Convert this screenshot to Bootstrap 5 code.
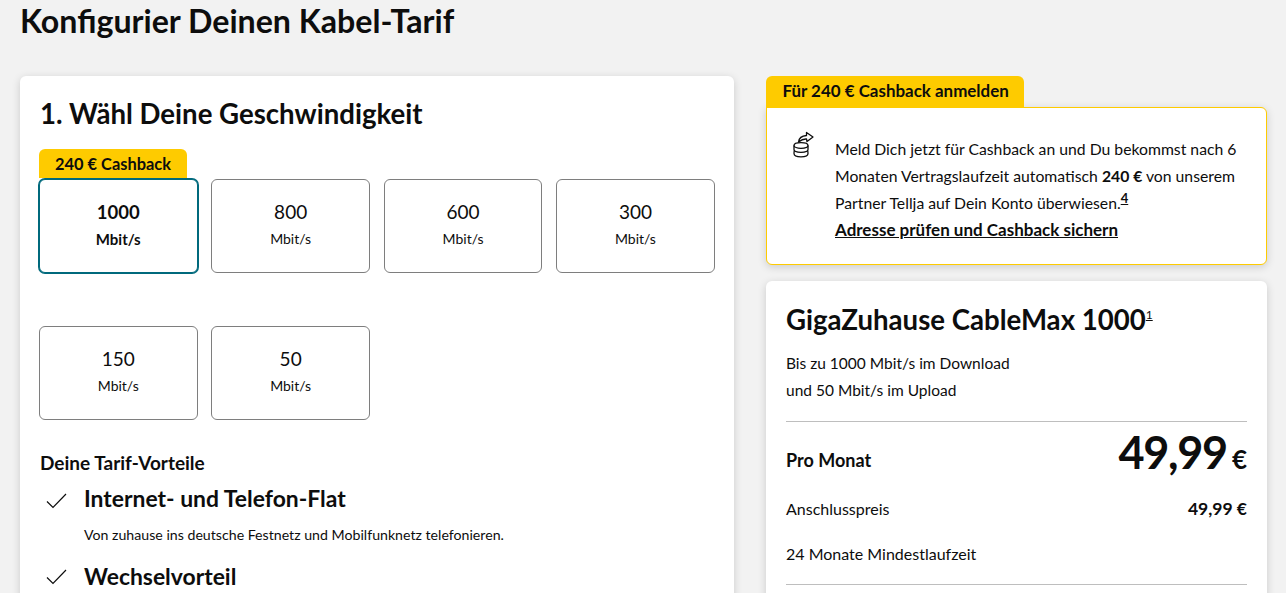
<!DOCTYPE html>
<html lang="de">
<head>
<meta charset="utf-8">
<title>Kabel-Tarif</title>
<link href="https://cdn.jsdelivr.net/npm/bootstrap@5.3.0/dist/css/bootstrap.min.css" rel="stylesheet">
<style>
html,body{height:593px;overflow:hidden}
body{background:#f2f2f2;color:#0d0d0d;font-family:"Lato","Liberation Sans",sans-serif;font-size:16px}
.page-wrap{padding:0 19px 0 20px}
.page-title{font-size:32.150px;line-height:42px;font-weight:700;margin:0}
.cols{display:grid;grid-template-columns:714px 501px;column-gap:32px;margin-top:34px}
.panel{background:#fff;border-radius:6px;box-shadow:0 2px 8px rgba(0,0,0,.16)}
.left-panel{padding:20px;height:560px}
.sec-title{font-size:27.600px;line-height:36px;font-weight:700;margin:0 0 47px}
.tiles{display:grid;grid-template-columns:repeat(4,158.500px);column-gap:13.900px;row-gap:53px;margin-left:-1px}
.tile{position:relative;height:94px;border:1px solid #7e7e7e;border-radius:6px;background:#fff;text-align:center;display:flex;flex-direction:column;justify-content:center;align-items:center}
.tile.sel{border-color:#00697c;box-shadow:0 0 0 1px #00697c;font-weight:700}
.tile-num{font-size:19px;line-height:26px}
.tile.sel .tile-num{font-size:18.500px}
.tile-unit{font-size:14px;line-height:28px;padding-bottom:1px}
.tile.sel .tile-unit{font-size:15px}
.tile-flag{position:absolute;left:-1px;top:-31px;width:148px;height:29px;background:#fecb00;border-radius:6px 6px 0 0;font-size:16.400px;line-height:30px;font-weight:700}
.perk-head{font-size:19px;line-height:26px;font-weight:700;margin:30px 0 0}
.perk{display:flex;margin-top:6px}
.perk + .perk{margin-top:15px}
.perk-ic{width:44px;flex:none;padding-left:6px;padding-top:11px;line-height:0}
.perk + .perk .perk-ic{padding-top:9px}
.perk-t{font-size:22.900px;line-height:32px;font-weight:700;margin:0}
.perk-d{font-size:14.170px;line-height:20px;margin:11px 0 0}
.flag{display:inline-block;background:#fecb00;border-radius:6px 6px 0 0;height:32px;padding:0 15.500px 0 16.500px;font-size:16.950px;line-height:30px;font-weight:700;vertical-align:top}
.cash{border:1px solid #fecb00;border-radius:0 6px 6px 6px;background:#fff;box-shadow:0 2px 8px rgba(0,0,0,.16);display:flex;height:158px;padding:0 20px;margin-top:-1px}
.cash-ic{width:48px;flex:none;padding-top:23px;padding-left:6px;line-height:0}
.cash-txt{padding-top:27px;line-height:27px;font-size:15.750px;margin:0}
.cash-txt sup{font-weight:700;text-decoration:underline;font-size:13px}
.cash-txt a{color:inherit;font-weight:700;font-size:17px;text-decoration:underline}
.tariff{margin-top:16px;padding:21px 20px 20px;height:340px}
.tariff-t{font-size:27.600px;line-height:36px;font-weight:700;margin:0 0 12px}
.tariff-t sup{font-size:12px;font-weight:400;text-decoration:underline;position:static;vertical-align:11px}
.tariff-d{line-height:27px;margin:0;font-size:15.500px}
.rule{height:1px;background:#bebebe;margin-top:17px}
.rule.low{margin-top:0}
.price-row{display:flex;justify-content:space-between;align-items:center;height:75px;font-weight:700;font-size:18px}
.price-lbl{margin-top:2px}
.price-val{margin-bottom:16px}
.price-big{font-size:45px;line-height:64px;letter-spacing:-1.300px}
.price-cur{font-size:26px;margin-left:5px}
.line-row{display:flex;justify-content:space-between;line-height:24px;margin-bottom:21px}
.line-row.last{margin-bottom:18px}
.line-row b{font-size:17.500px}
</style>
</head>
<body>
<div class="page-wrap">
  <h1 class="page-title">Konfigurier Deinen Kabel-Tarif</h1>
  <div class="cols">
    <div class="panel left-panel">
      <h2 class="sec-title">1. Wähl Deine Geschwindigkeit</h2>
      <div class="tiles">
        <div class="tile sel"><div class="tile-flag">240 € Cashback</div><div class="tile-num">1000</div><div class="tile-unit">Mbit/s</div></div>
        <div class="tile"><div class="tile-num">800</div><div class="tile-unit">Mbit/s</div></div>
        <div class="tile"><div class="tile-num">600</div><div class="tile-unit">Mbit/s</div></div>
        <div class="tile"><div class="tile-num">300</div><div class="tile-unit">Mbit/s</div></div>
        <div class="tile"><div class="tile-num">150</div><div class="tile-unit">Mbit/s</div></div>
        <div class="tile"><div class="tile-num">50</div><div class="tile-unit">Mbit/s</div></div>
      </div>
      <p class="perk-head">Deine Tarif-Vorteile</p>
      <div class="perk">
        <div class="perk-ic"><svg width="21" height="16" viewBox="0 0 21 16"><path d="M1 8.500L7 14.500L20 1" fill="none" stroke="#0d0d0d" stroke-width="1.200"/></svg></div>
        <div><p class="perk-t">Internet- und Telefon-Flat</p><p class="perk-d">Von zuhause ins deutsche Festnetz und Mobilfunknetz telefonieren.</p></div>
      </div>
      <div class="perk">
        <div class="perk-ic"><svg width="21" height="16" viewBox="0 0 21 16"><path d="M1 8.500L7 14.500L20 1" fill="none" stroke="#0d0d0d" stroke-width="1.200"/></svg></div>
        <div><p class="perk-t">Wechselvorteil</p></div>
      </div>
    </div>
    <div>
      <div class="flag">Für 240 € Cashback anmelden</div>
      <div class="cash">
        <div class="cash-ic"><svg width="21" height="27" viewBox="0 0 21 27" fill="none" stroke="#0d0d0d" stroke-width="1.300" stroke-linejoin="round"><path d="M5.500 11C6 7 9 4.800 13.500 4.500L13.500 1.500L20 6L14 10.500L13.500 8C10.500 7.800 8 9 5.500 11Z"/><ellipse cx="8" cy="14.500" rx="7" ry="2.800"/><path d="M1 14.500V18.500C1 20 4 21.300 8 21.300S15 20 15 18.500V14.500"/><path d="M1.500 19.500C1 20 1 21 1 22.500C1 24.500 4 25.800 8 25.800S15 24.500 15 22.500C15 21 15 20 14.500 19.500"/></svg></div>
        <p class="cash-txt">Meld Dich jetzt für Cashback an und Du bekommst nach 6 Monaten Vertragslaufzeit automatisch <b>240 €</b> von unserem Partner Tellja auf Dein Konto überwiesen.<sup>4</sup><br><a href="#">Adresse prüfen und Cashback sichern</a></p>
      </div>
      <div class="panel tariff">
        <h2 class="tariff-t">GigaZuhause CableMax 1000<sup>1</sup></h2>
        <p class="tariff-d">Bis zu 1000 Mbit/s im Download<br>und 50 Mbit/s im Upload</p>
        <div class="rule"></div>
        <div class="price-row"><span class="price-lbl">Pro Monat</span><span class="price-val"><span class="price-big">49,99</span><span class="price-cur">€</span></span></div>
        <div class="line-row"><span>Anschlusspreis</span><b>49,99 €</b></div>
        <div class="line-row last"><span>24 Monate Mindestlaufzeit</span></div>
        <div class="rule low"></div>
      </div>
    </div>
  </div>
</div>
</body>
</html>
